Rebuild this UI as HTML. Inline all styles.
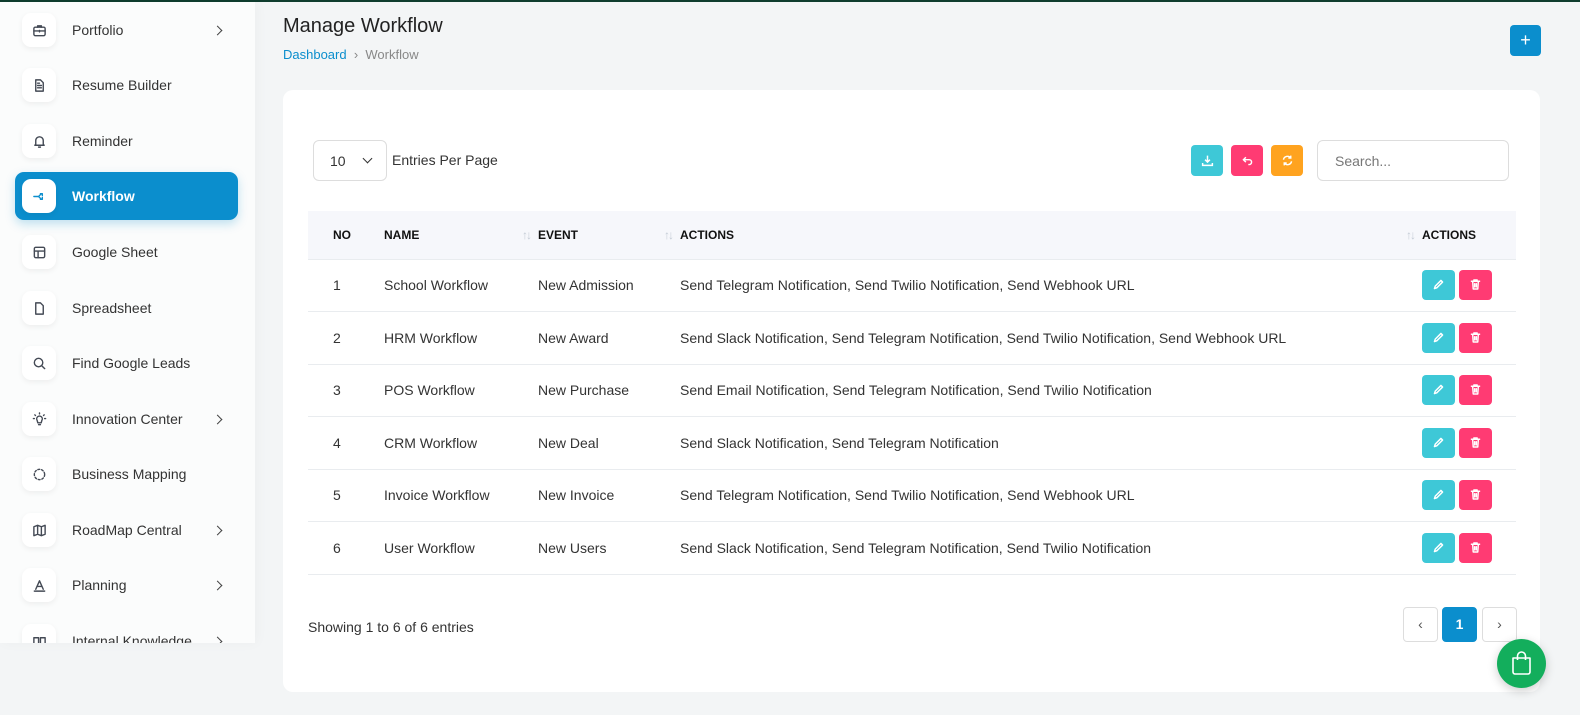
<!DOCTYPE html>
<html><head><meta charset="utf-8"><style>
*{box-sizing:border-box;margin:0;padding:0}
body{width:1580px;height:715px;overflow:hidden;background:#f3f5f6;font-family:"Liberation Sans",sans-serif;color:#333;position:relative}
.top{position:absolute;left:0;top:0;width:1580px;height:2px;background:#0f3d2e}
.side{position:absolute;left:0;top:2px;width:255px;height:641px;background:#fbfcfc;overflow:hidden;box-shadow:2px 0 12px rgba(0,0,0,.03)}
.it{position:absolute;left:22px;height:34px;width:220px;display:flex;align-items:center;font-size:14px;color:#333}
.ib{width:34px;height:34px;border-radius:9px;background:#fff;box-shadow:0 2px 6px rgba(0,0,0,.06);display:flex;align-items:center;justify-content:center;margin-right:16px}
.ib svg{width:15px;height:15px;fill:none;stroke:#444a55;stroke-width:1.5;stroke-linecap:round;stroke-linejoin:round}
.ch{position:absolute;left:192px;top:14px;width:7px;height:7px;border-right:1.5px solid #444;border-top:1.5px solid #444;transform:rotate(45deg)}
.act{position:absolute;left:15px;top:170px;width:223px;height:48px;background:#0b8ecd;border-radius:9px;box-shadow:0 4px 10px rgba(11,142,205,.25)}
h1{position:absolute;left:283px;top:15px;font-size:20px;font-weight:normal;color:#222}
.bc{position:absolute;left:283px;top:47px;font-size:13px;color:#888}
.bc a{color:#0b8ecd;text-decoration:none}
.plus{position:absolute;left:1510px;top:25px;width:31px;height:31px;background:#0b8ecd;border-radius:4px;color:#fff;font-size:18px;text-align:center;line-height:30px}
.card{position:absolute;left:283px;top:90px;width:1257px;height:602px;background:#fff;border-radius:10px}
.sel{position:absolute;left:30px;top:50px;width:74px;height:41px;border:1px solid #ddd;border-radius:6px;font-size:14px;padding:12px 0 0 16px}
.sel:after{content:"";position:absolute;left:50px;top:14px;width:6px;height:6px;border-right:1.6px solid #333;border-bottom:1.6px solid #333;transform:rotate(45deg)}
.epp{position:absolute;left:109px;top:62px;font-size:14px}
.sb{position:absolute;top:55px;width:32px;height:31px;border-radius:4px}
.srch{position:absolute;left:1034px;top:50px;width:192px;height:41px;border:1px solid #ddd;border-radius:6px;font-size:14px;color:#777;padding:12px 0 0 17px}
table{position:absolute;left:25px;top:121px;width:1208px;border-collapse:collapse;font-size:14px}
th{height:48px;background:#f6f7fb;text-align:left;font-size:12px;font-weight:bold;color:#111;position:relative;border-bottom:1px solid #e9ecef}
td{height:52.5px;border-bottom:1px solid #e9ecef;color:#333}
.ar{position:absolute;right:8px;top:17px;color:#c5ccd6;font-size:12px;letter-spacing:-2px;font-weight:normal}
.bt{display:inline-block;width:33px;height:30px;border-radius:4px;vertical-align:middle;margin-right:4px;position:relative}
.bt svg{position:absolute;left:10px;top:8px;width:13px;height:13px;fill:none;stroke:#fff;stroke-width:1.8;stroke-linecap:round;stroke-linejoin:round}
.show{position:absolute;left:25px;top:529px;font-size:14px}
.pg{position:absolute;top:517px;width:35px;height:35px;border:1px solid #ddd;border-radius:4px;text-align:center;line-height:33px;font-size:14px;color:#555}
.fab{position:absolute;left:1497px;top:639px;width:49px;height:49px;border-radius:50%;background:#13ae5c;box-shadow:0 3px 10px rgba(0,0,0,.2)}
</style></head><body>
<div class="top"></div>
<div class="side">
<div class="act"></div>
<div class="it" style="top:11px"><div class="ib"><svg viewBox="0 0 16 16"><rect x="2" y="4.5" width="12" height="9" rx="1.5"/><path d="M6 4.5V3h4v1.5M2 8.5h12M8 8v1.5"/></svg></div>Portfolio<span class="ch"></span></div>
<div class="it" style="top:66px"><div class="ib"><svg viewBox="0 0 16 16"><path d="M4 2h5l3 3v9H4zM6 8h4M6 10.5h4M6 5.5h2"/></svg></div>Resume Builder</div>
<div class="it" style="top:122px"><div class="ib"><svg viewBox="0 0 16 16"><path d="M4 11V7a4 4 0 018 0v4l1 1H3zM7 14h2"/></svg></div>Reminder</div>
<div class="it" style="top:177px;color:#fff;font-weight:bold"><div class="ib"><svg viewBox="0 0 16 16" style="stroke:#0b8ecd"><path d="M2 8h5l3-3M7 8l3 3M9 5h2v2M9 11h2V9"/></svg></div>Workflow</div>
<div class="it" style="top:233px"><div class="ib"><svg viewBox="0 0 16 16"><rect x="2.5" y="2.5" width="11" height="11" rx="1.5"/><path d="M2.5 6.5h11M6.5 6.5v7"/></svg></div>Google Sheet</div>
<div class="it" style="top:289px"><div class="ib"><svg viewBox="0 0 16 16"><path d="M4 2h5l3 3v9H4z"/></svg></div>Spreadsheet</div>
<div class="it" style="top:344px"><div class="ib"><svg viewBox="0 0 16 16"><circle cx="7" cy="7" r="4.5"/><path d="M10.5 10.5l3 3"/></svg></div>Find Google Leads</div>
<div class="it" style="top:400px"><div class="ib"><svg viewBox="0 0 16 16"><path d="M5.5 9a3 3 0 115 0l-.7 2.5H6.2zM7 13.5h2M1.5 7h1M13.5 7h1M3 3l.7.7M13 3l-.7.7M8 1v1"/></svg></div>Innovation Center<span class="ch"></span></div>
<div class="it" style="top:455px"><div class="ib"><svg viewBox="0 0 16 16"><circle cx="8" cy="8" r="5.5" stroke-dasharray="2 2"/></svg></div>Business Mapping</div>
<div class="it" style="top:511px"><div class="ib"><svg viewBox="0 0 16 16"><path d="M2 4l4-1.5 4 1.5 4-1.5v9.5l-4 1.5-4-1.5-4 1.5zM6 2.5V12M10 4v9.5"/></svg></div>RoadMap Central<span class="ch"></span></div>
<div class="it" style="top:566px"><div class="ib"><svg viewBox="0 0 16 16"><path d="M4 12l4-9 4 9M5.5 9h5M2.5 14h11"/></svg></div>Planning<span class="ch"></span></div>
<div class="it" style="top:622px"><div class="ib"><svg viewBox="0 0 16 16"><path d="M2 4h5v9H2zM9 4h5v9H9z"/></svg></div>Internal Knowledge<span class="ch"></span></div>
</div>
<h1>Manage Workflow</h1>
<div class="bc"><a>Dashboard</a> &nbsp;›&nbsp; Workflow</div>
<div class="plus">+</div>
<div class="card">
<div class="sel">10</div><div class="epp">Entries Per Page</div>
<div class="sb" style="left:908px;background:#3ec8d7"><svg style="position:absolute;left:10px;top:9px" width="13" height="13" viewBox="0 0 16 16" fill="none" stroke="#fff" stroke-width="1.8"><path d="M8 2v8M5 7l3 3 3-3M2 11v3h12v-3"/></svg></div>
<div class="sb" style="left:948px;background:#ff3b73"><svg style="position:absolute;left:10px;top:9px" width="13" height="13" viewBox="0 0 16 16" fill="none" stroke="#fff" stroke-width="1.8"><path d="M6 4L3 7l3 3M3 7h7a3 3 0 010 6H9"/></svg></div>
<div class="sb" style="left:988px;background:#ffa31f"><svg style="position:absolute;left:10px;top:9px" width="13" height="13" viewBox="0 0 16 16" fill="none" stroke="#fff" stroke-width="1.8"><path d="M3 7a5 5 0 019-2M13 9a5 5 0 01-9 2M12 2v3H9M4 14v-3h3"/></svg></div>
<div class="srch">Search...</div>
<table>
<tr><th style="width:76px;padding-left:25px">NO</th><th style="width:154px">NAME<span class="ar">↑↓</span></th><th style="width:142px">EVENT<span class="ar">↑↓</span></th><th style="width:742px">ACTIONS<span class="ar">↑↓</span></th><th>ACTIONS</th></tr>
<tr><td style="padding-left:25px">1</td><td>School Workflow</td><td>New Admission</td><td>Send Telegram Notification, Send Twilio Notification, Send Webhook URL</td><td><span class="bt" style="background:#3ec8d7"><svg viewBox="0 0 16 16"><path d="M3 13l1-3 7-7 2 2-7 7z"/></svg></span><span class="bt" style="background:#ff3b73"><svg viewBox="0 0 16 16"><path d="M3 4h10M6 4V2.5h4V4M4.5 4l.7 9.5h5.6l.7-9.5M7 7v4M9 7v4"/></svg></span></td></tr>
<tr><td style="padding-left:25px">2</td><td>HRM Workflow</td><td>New Award</td><td>Send Slack Notification, Send Telegram Notification, Send Twilio Notification, Send Webhook URL</td><td><span class="bt" style="background:#3ec8d7"><svg viewBox="0 0 16 16"><path d="M3 13l1-3 7-7 2 2-7 7z"/></svg></span><span class="bt" style="background:#ff3b73"><svg viewBox="0 0 16 16"><path d="M3 4h10M6 4V2.5h4V4M4.5 4l.7 9.5h5.6l.7-9.5M7 7v4M9 7v4"/></svg></span></td></tr>
<tr><td style="padding-left:25px">3</td><td>POS Workflow</td><td>New Purchase</td><td>Send Email Notification, Send Telegram Notification, Send Twilio Notification</td><td><span class="bt" style="background:#3ec8d7"><svg viewBox="0 0 16 16"><path d="M3 13l1-3 7-7 2 2-7 7z"/></svg></span><span class="bt" style="background:#ff3b73"><svg viewBox="0 0 16 16"><path d="M3 4h10M6 4V2.5h4V4M4.5 4l.7 9.5h5.6l.7-9.5M7 7v4M9 7v4"/></svg></span></td></tr>
<tr><td style="padding-left:25px">4</td><td>CRM Workflow</td><td>New Deal</td><td>Send Slack Notification, Send Telegram Notification</td><td><span class="bt" style="background:#3ec8d7"><svg viewBox="0 0 16 16"><path d="M3 13l1-3 7-7 2 2-7 7z"/></svg></span><span class="bt" style="background:#ff3b73"><svg viewBox="0 0 16 16"><path d="M3 4h10M6 4V2.5h4V4M4.5 4l.7 9.5h5.6l.7-9.5M7 7v4M9 7v4"/></svg></span></td></tr>
<tr><td style="padding-left:25px">5</td><td>Invoice Workflow</td><td>New Invoice</td><td>Send Telegram Notification, Send Twilio Notification, Send Webhook URL</td><td><span class="bt" style="background:#3ec8d7"><svg viewBox="0 0 16 16"><path d="M3 13l1-3 7-7 2 2-7 7z"/></svg></span><span class="bt" style="background:#ff3b73"><svg viewBox="0 0 16 16"><path d="M3 4h10M6 4V2.5h4V4M4.5 4l.7 9.5h5.6l.7-9.5M7 7v4M9 7v4"/></svg></span></td></tr>
<tr><td style="padding-left:25px">6</td><td>User Workflow</td><td>New Users</td><td>Send Slack Notification, Send Telegram Notification, Send Twilio Notification</td><td><span class="bt" style="background:#3ec8d7"><svg viewBox="0 0 16 16"><path d="M3 13l1-3 7-7 2 2-7 7z"/></svg></span><span class="bt" style="background:#ff3b73"><svg viewBox="0 0 16 16"><path d="M3 4h10M6 4V2.5h4V4M4.5 4l.7 9.5h5.6l.7-9.5M7 7v4M9 7v4"/></svg></span></td></tr>
</table>
<div class="show">Showing 1 to 6 of 6 entries</div>
<div class="pg" style="left:1120px">‹</div>
<div class="pg" style="left:1159px;background:#0b8ecd;border-color:#0b8ecd;color:#fff;font-weight:bold">1</div>
<div class="pg" style="left:1199px">›</div>
</div>
<div class="fab"><svg style="position:absolute;left:14px;top:12px" width="21" height="24" viewBox="0 0 21 24" fill="none" stroke="#fff" stroke-width="1.6" stroke-linejoin="round"><path d="M2 7h17v14a2 2 0 01-2 2H4a2 2 0 01-2-2zM6.5 9V5a4 4 0 018 0v4"/></svg></div>
</body></html>
